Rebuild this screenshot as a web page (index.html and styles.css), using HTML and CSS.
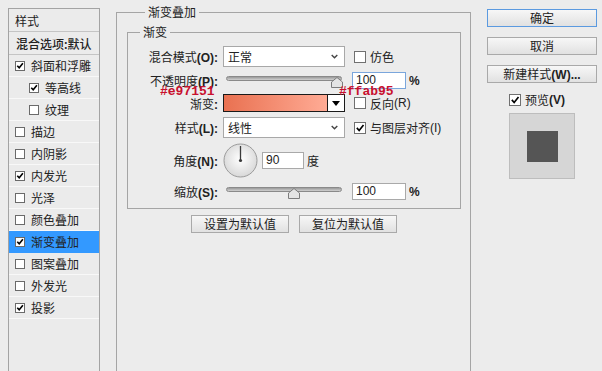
FILE: index.html
```html
<!DOCTYPE html>
<html>
<head>
	<meta charset="utf-8">
	<title>图层样式</title>
	<link rel="stylesheet" href="styles.css">
</head>
<body>
<div class="dialog">

	<div class="styles-list">
		<div class="list-head">样式</div>
		<div class="list-item blend">混合选项:默认</div>
		<div class="list-item"><span class="cb on"><svg viewBox="0 0 10 10"><path d="M1.6 4.6 L4 7.2 L8.6 1.6"/></svg></span>斜面和浮雕</div>
		<div class="list-item sub"><span class="cb on"><svg viewBox="0 0 10 10"><path d="M1.6 4.6 L4 7.2 L8.6 1.6"/></svg></span>等高线</div>
		<div class="list-item sub"><span class="cb"></span>纹理</div>
		<div class="list-item"><span class="cb"></span>描边</div>
		<div class="list-item"><span class="cb"></span>内阴影</div>
		<div class="list-item"><span class="cb on"><svg viewBox="0 0 10 10"><path d="M1.6 4.6 L4 7.2 L8.6 1.6"/></svg></span>内发光</div>
		<div class="list-item"><span class="cb"></span>光泽</div>
		<div class="list-item"><span class="cb"></span>颜色叠加</div>
		<div class="list-item active"><span class="cb on"><svg viewBox="0 0 10 10"><path d="M1.6 4.6 L4 7.2 L8.6 1.6"/></svg></span>渐变叠加</div>
		<div class="list-item"><span class="cb"></span>图案叠加</div>
		<div class="list-item"><span class="cb"></span>外发光</div>
		<div class="list-item"><span class="cb on"><svg viewBox="0 0 10 10"><path d="M1.6 4.6 L4 7.2 L8.6 1.6"/></svg></span>投影</div>
	</div>

	<fieldset class="group outer">
		<legend>渐变叠加</legend>

		<fieldset class="group inner">
			<legend>渐变</legend>
			<div class="form">
				<span class="lbl">混合模式<span class="key">(O):</span></span>
				<div class="select"><span>正常</span><svg class="chev" viewBox="0 0 8 5"><polyline points="0.8,0.8 4,4 7.2,0.8"/></svg></div>
				<label class="check"><span class="cb"></span>仿色</label>

				<span class="lbl">不透明度<span class="key">(P):</span></span>
				<div class="slider"><span class="thumb" style="left:104px"><svg viewBox="0 0 12 11"><path d="M6 0.5 L11.5 5 L11.5 10.5 L0.5 10.5 L0.5 5 Z"/></svg></span></div>
				<div class="num"><span class="field focus">100</span><span class="unit">%</span></div>

				<span class="lbl">渐变<span class="key">:</span></span>
				<div class="gradient"><span class="swatch"></span><span class="drop"><i></i></span></div>
				<label class="check"><span class="cb"></span>反向<span class="ckey">(R)</span></label>

				<span class="lbl">样式<span class="key">(L):</span></span>
				<div class="select"><span>线性</span><svg class="chev" viewBox="0 0 8 5"><polyline points="0.8,0.8 4,4 7.2,0.8"/></svg></div>
				<label class="check"><span class="cb on"><svg viewBox="0 0 12 12"><path d="M2.2 5.8 L5 9 L10.2 2.4"/></svg></span>与图层对齐<span class="ckey">(I)</span></label>

				<span class="lbl">角度<span class="key">(N):</span></span>
				<div class="angle">
					<svg class="dial" viewBox="0 0 35 35">
						<defs>
							<radialGradient id="dialFill" cx="0.5" cy="0.45" r="0.55">
								<stop offset="0" stop-color="#ffffff"/>
								<stop offset="1" stop-color="#d8d8d8"/>
							</radialGradient>
						</defs>
						<circle cx="17.5" cy="17.5" r="16.5" fill="url(#dialFill)" stroke="#9b9b9b"/>
						<line x1="17.5" y1="17.5" x2="17.5" y2="3" stroke="#3a3a3a" stroke-width="1.3"/>
						<circle cx="17.5" cy="17.5" r="1.6" fill="#3a3a3a"/>
					</svg>
					<span class="field short">90</span>
					<span class="deg">度</span>
				</div>
				<span></span>

				<span class="lbl">缩放<span class="key">(S):</span></span>
				<div class="slider"><span class="thumb" style="left:61px"><svg viewBox="0 0 12 11"><path d="M6 0.5 L11.5 5 L11.5 10.5 L0.5 10.5 L0.5 5 Z"/></svg></span></div>
				<div class="num"><span class="field">100</span><span class="unit">%</span></div>

				<span class="note note-start">#e97151</span>
				<span class="note note-end">#ffab95</span>
			</div>
		</fieldset>

		<div class="defaults">
			<button class="btn">设置为默认值</button>
			<button class="btn">复位为默认值</button>
		</div>
	</fieldset>

	<div class="actions">
		<button class="btn wide default">确定</button>
		<button class="btn wide">取消</button>
		<button class="btn wide">新建样式<span class="bkey">(W)...</span></button>
		<label class="check preview-check"><span class="cb on"><svg viewBox="0 0 12 12"><path d="M2.2 5.8 L5 9 L10.2 2.4"/></svg></span>预览<span class="bkey">(V)</span></label>
		<div class="preview"><div class="swatch-dark"></div></div>
	</div>

</div>
</body>
</html>
```

FILE: styles.css
```css
body
{
	margin: 0;
	width: 602px;
	height: 371px;
	overflow: hidden;
	background: #ececec;
	font-family: "Noto Sans CJK SC", "Liberation Sans", sans-serif;
	font-size: 12px;
	color: #222;
}

.dialog
{
	display: flex;
	align-items: flex-start;
	gap: 16px;
	padding-left: 8px;
}

/* left list of effects */

.styles-list
{
	width: 92px;
	height: 380px;
	margin-top: 8px;
	box-sizing: border-box;
	border: 1px solid #a3a3a3;
	background: #ebebeb;
}

.list-head, .list-item
{
	display: flex;
	align-items: center;
	height: 21px;
	padding-left: 6px;
	border-bottom: 1px solid #f8f8f8;
	white-space: nowrap;
}

.list-head
{
	height: 22px;
	border-bottom-color: #c4c4c4;
}

.list-item.blend
{
	height: 22px;
	padding-left: 7px;
	border-bottom-color: #c4c4c4;
	font-weight: 500;
}

.list-item.sub
{
	padding-left: 20px;
}

.list-item.active
{
	background: #3399ff;
	border-bottom-color: #3399ff;
}

.cb
{
	flex: none;
	display: flex;
	width: 10px;
	height: 10px;
	box-sizing: border-box;
	margin-right: 6px;
	border: 1px solid #6a6a6a;
	background: #fff;
}

.cb svg
{
	width: 100%;
	height: 100%;
	overflow: visible;
}

.cb path
{
	fill: none;
	stroke: #000;
	stroke-width: 2;
}

/* group boxes */

.group
{
	margin: 0;
	padding: 0;
	min-width: 0;
	border: 1px solid #a5a5a5;
}

.group legend
{
	padding: 0 3px;
	font-size: 12px;
	line-height: 14px;
}

.outer
{
	width: 355px;
	height: 380px;
	box-sizing: border-box;
	margin-top: 5px;
	padding: 0 9px 0 10px;
}

.outer > legend
{
	margin-left: 18px;
}

.inner
{
	margin-top: 6px;
	padding: 7px 0 8px 0;
}

.inner > legend
{
	margin-left: 12px;
}

.form
{
	position: relative;
	display: grid;
	grid-template-columns: 95px 122px auto;
	grid-template-rows: 21px 17px 18px 21px 35px 17px;
	row-gap: 5px;
	align-items: center;
}

.lbl
{
	padding-right: 5px;
	text-align: right;
	white-space: nowrap;
}

.key
{
	font-family: "Liberation Sans", sans-serif;
	font-weight: bold;
}

.ckey, .bkey
{
	font-family: "Liberation Sans", sans-serif;
}

.bkey
{
	font-weight: bold;
}

.select
{
	display: flex;
	align-items: center;
	justify-content: space-between;
	height: 21px;
	box-sizing: border-box;
	padding: 0 6px 0 4px;
	border: 1px solid #a8a8a8;
	background: #fff;
}

.chev
{
	width: 7px;
	height: 5px;
}

.chev polyline
{
	fill: none;
	stroke: #444;
	stroke-width: 1.6;
}

.check
{
	display: flex;
	align-items: center;
	margin-left: 9px;
	white-space: nowrap;
}

.check .cb
{
	width: 12px;
	height: 12px;
	margin-right: 4px;
	border-color: #707070;
}

.slider
{
	position: relative;
	align-self: start;
	width: 116px;
	height: 5px;
	margin: 4px 0 0 3px;
	box-sizing: border-box;
	border: 1px solid #8a8a8a;
	border-radius: 3px;
	background: linear-gradient(#9a9a9a, #d0d0d0);
}

.thumb
{
	position: absolute;
	top: 0;
	width: 12px;
	height: 11px;
}

.thumb svg
{
	display: block;
	width: 12px;
	height: 11px;
}

.thumb path
{
	fill: #e4e4e4;
	stroke: #7c7c7c;
}

.num
{
	display: flex;
	align-items: center;
	margin-left: 7px;
}

.field
{
	width: 54px;
	height: 17px;
	box-sizing: border-box;
	padding-left: 3px;
	border: 1px solid #a9a9a9;
	background: #fff;
	font-family: "Liberation Sans", sans-serif;
	font-size: 12px;
	line-height: 15px;
}

.field.focus
{
	border-color: #7aa6dc;
}

.field.short
{
	width: 42px;
}

.unit
{
	margin-left: 3px;
	font-family: "Liberation Sans", sans-serif;
	font-weight: bold;
}

.gradient
{
	display: flex;
	height: 18px;
	box-sizing: border-box;
	border: 1px solid #1a1a1a;
}

.swatch
{
	flex: 1;
	background: linear-gradient(to right, #e97151, #ffab95);
}

.drop
{
	display: flex;
	align-items: center;
	justify-content: center;
	width: 16px;
	border-left: 1px solid #1a1a1a;
	background: #fff;
}

.drop i
{
	width: 0;
	height: 0;
	border-left: 4px solid transparent;
	border-right: 4px solid transparent;
	border-top: 5px solid #000;
}

.angle
{
	display: flex;
	align-items: center;
}

.dial
{
	width: 35px;
	height: 35px;
	margin-right: 4px;
}

.deg
{
	margin-left: 3px;
}

.note
{
	position: absolute;
	top: 39px;
	font-family: "Liberation Mono", monospace;
	font-size: 13px;
	font-weight: bold;
	line-height: 13px;
	color: #c8102e;
}

.note-start
{
	left: 32px;
}

.note-end
{
	left: 211px;
}

/* buttons */

.btn
{
	height: 18px;
	box-sizing: border-box;
	padding: 0;
	border: 1px solid #a9a9a9;
	background: linear-gradient(#f7f7f7, #e1e1e1);
	font-family: "Noto Sans CJK SC", "Liberation Sans", sans-serif;
	font-size: 12px;
	line-height: 16px;
	color: #222;
}

.defaults
{
	display: flex;
	justify-content: center;
	gap: 10px;
	margin-top: 6px;
}

.defaults .btn
{
	width: 98px;
}

.actions
{
	display: flex;
	flex-direction: column;
	gap: 10px;
	width: 110px;
	margin-top: 9px;
}

.btn.wide
{
	width: 110px;
}

.btn.default
{
	border-color: #5b9ae0;
}

.preview-check
{
	height: 13px;
	margin: 0 0 0 22px;
}

.preview
{
	display: flex;
	align-items: center;
	justify-content: center;
	width: 66px;
	height: 66px;
	box-sizing: border-box;
	margin: -3px 0 0 22px;
	border: 1px solid #bdbdbd;
	background: #d6d6d6;
}

.swatch-dark
{
	width: 31px;
	height: 31px;
	background: #555;
}
```
